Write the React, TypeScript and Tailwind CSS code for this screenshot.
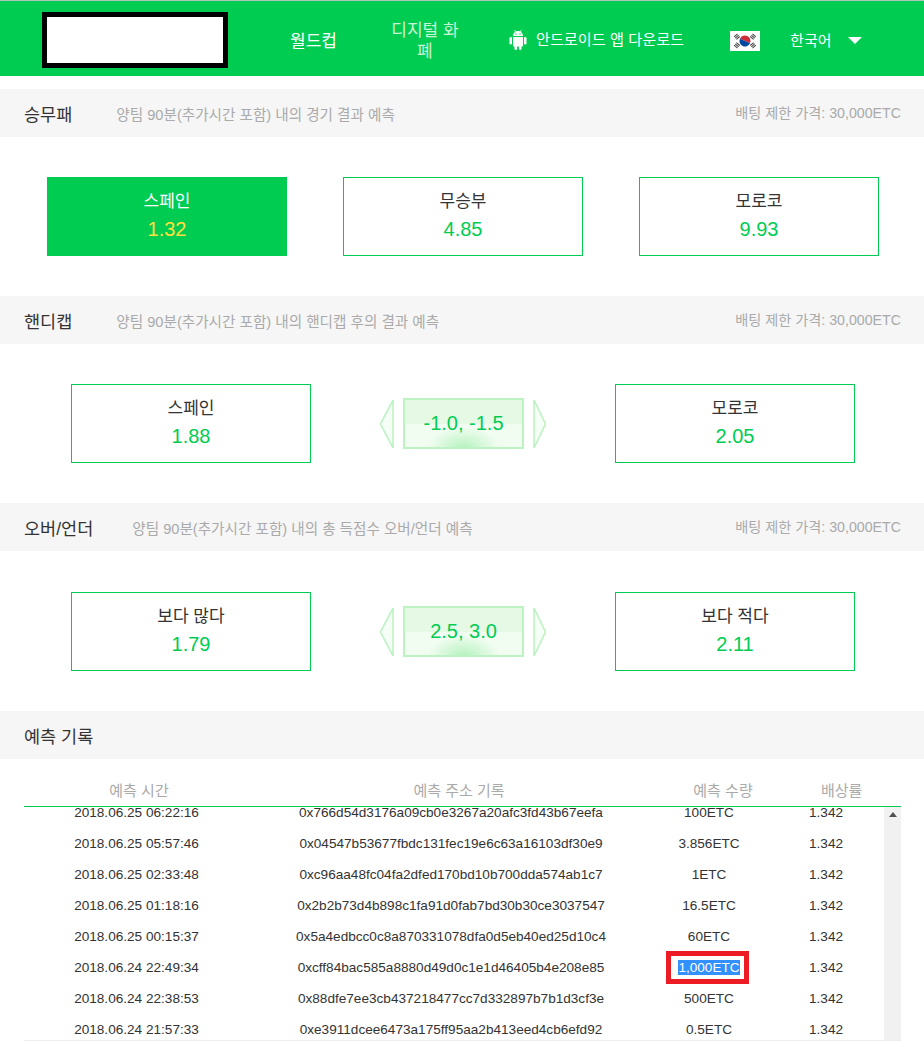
const font = "font-['Liberation_Sans','Noto_Sans_CJK_KR',sans-serif]";

const records = [
  ["2018.06.25 06:22:16", "0x766d54d3176a09cb0e3267a20afc3fd43b67eefa", "100ETC"],
  ["2018.06.25 05:57:46", "0x04547b53677fbdc131fec19e6c63a16103df30e9", "3.856ETC"],
  ["2018.06.25 02:33:48", "0xc96aa48fc04fa2dfed170bd10b700dda574ab1c7", "1ETC"],
  ["2018.06.25 01:18:16", "0x2b2b73d4b898c1fa91d0fab7bd30b30ce3037547", "16.5ETC"],
  ["2018.06.25 00:15:37", "0x5a4edbcc0c8a870331078dfa0d5eb40ed25d10c4", "60ETC"],
  ["2018.06.24 22:49:34", "0xcff84bac585a8880d49d0c1e1d46405b4e208e85", "1,000ETC"],
  ["2018.06.24 22:38:53", "0x88dfe7ee3cb437218477cc7d332897b7b1d3cf3e", "500ETC"],
  ["2018.06.24 21:57:33", "0xe3911dcee6473a175ff95aa2b413eed4cb6efd92", "0.5ETC"],
];

function AndroidIcon() {
  return (
    <svg width="18" height="21" viewBox="0 0 18 21" fill="#fff" className="block">
      <path d="M4 7a5 5 0 0 1 10 0z" />
      <path d="M5.500 1l1.500 2.500M12.500 1l-1.500 2.500" stroke="#fff" strokeWidth="0.8" />
      <circle cx="7" cy="5" r="0.7" fill="#00cc52" />
      <circle cx="11" cy="5" r="0.7" fill="#00cc52" />
      <path d="M4 8h10v8.500a1 1 0 0 1-1 1H5a1 1 0 0 1-1-1z" />
      <rect x="0.500" y="8" width="2.500" height="7.500" rx="1.250" />
      <rect x="15" y="8" width="2.500" height="7.500" rx="1.250" />
      <rect x="5.500" y="16" width="2.600" height="5" rx="1.300" />
      <rect x="9.900" y="16" width="2.600" height="5" rx="1.300" />
    </svg>
  );
}

function KoreaFlag() {
  return (
    <svg width="30" height="20" viewBox="0 0 30 20" className="block">
      <rect width="30" height="20" fill="#fff" />
      <path d="M9.500 10a5.500 5.500 0 0 1 11 0z" fill="#cd2e3a" transform="rotate(25 15 10)" />
      <path d="M9.500 10a5.500 5.500 0 0 0 11 0z" fill="#0047a0" transform="rotate(25 15 10)" />
      <g stroke="#444" strokeWidth="4.500" strokeDasharray="1 .7">
        <path d="M5.500 4l3 3.500M24.500 4l-3 3.500M5.500 16l3-3.500M24.500 16l-3-3.500" />
      </g>
    </svg>
  );
}

function SectionBar({
  title,
  desc,
  limit = true,
  gap = "mr-[44px]",
}: {
  title: string;
  desc?: string;
  limit?: boolean;
  gap?: string;
}) {
  return (
    <div className="flex h-12 items-center bg-[#f6f6f6] pl-6 pr-[23px] pt-1">
      <span className={`${gap} text-[17.5px] text-[#333]`}>{title}</span>
      {desc && <span className="mt-[2px] text-[14.6px] text-[#aaa]">{desc}</span>}
      {limit && <span className="mb-[3px] ml-auto text-[14.2px] text-[#aaa]">배팅 제한 가격: 30,000ETC</span>}
    </div>
  );
}

function OddsCard({ name, odds, active }: { name: string; odds: string; active?: boolean }) {
  return (
    <div
      className={`flex h-[79px] w-60 flex-col items-center justify-center border border-[#00cc52] pb-[2px] ${
        active ? "bg-[#00cc52]" : "bg-white"
      }`}
    >
      <span className={`text-[17px] leading-6 ${active ? "text-white" : "text-[#333]"}`}>{name}</span>
      <span className={`mt-[3px] text-xl leading-6 ${active ? "text-[#ffe03d]" : "text-[#00cc52]"}`}>{odds}</span>
    </div>
  );
}

function Handicap({ value }: { value: string }) {
  return (
    <div className="flex items-center gap-[9px]">
      <svg width="14" height="50" viewBox="0 0 14 50">
        <path d="M13 1v48L0.500 25z" fill="#f5fff5" stroke="#b9f2bf" strokeWidth="1.500" />
      </svg>
      <div className="flex h-[51px] w-[121px] items-center justify-center border-2 border-[#bdf2c3] bg-[radial-gradient(ellipse_36px_20px_at_50%_100%,#b8f2c0,transparent),linear-gradient(#e5f9e5_50%,#f2fdf2_50%)] pb-[2px] text-xl text-[#00cc52]">
        {value}
      </div>
      <svg width="13" height="50" viewBox="0 0 13 50">
        <path d="M1 1v48l11.500-24z" fill="#f5fff5" stroke="#b9f2bf" strokeWidth="1.500" />
      </svg>
    </div>
  );
}

export default function App() {
  return (
    <div className={`${font} relative h-[1042px] w-[924px] overflow-hidden bg-white`}>
      <header className="flex h-[76px] items-center border-t border-[#b5c4b9] bg-[#00cc52] pt-[3px] text-white">
        <div className="ml-[42px] h-[56px] w-[186px] border-[5px] border-black bg-white" />
        <a className="ml-[62px] mt-[3px] text-[17px]">월드컵</a>
        <a className="ml-[49px] mt-[2px] w-[78px] text-center text-[17px] leading-[21px] text-[#c9f5d6]">디지털 화폐</a>
        <a className="ml-[45px] flex items-center text-[15.200px]">
          <AndroidIcon />
          <span className="ml-[9px]">안드로이드 앱 다운로드</span>
        </a>
        <div className="ml-[46px] mt-[2px]">
          <KoreaFlag />
        </div>
        <span className="ml-[30px] mt-[3px] text-[15px]">한국어</span>
        <span className="ml-[16px] h-0 w-0 border-x-[7px] border-t-[7px] border-x-transparent border-t-white" />
      </header>

      <main className="pt-[13px]">
        <SectionBar title="승무패" desc="양팀 90분(추가시간 포함) 내의 경기 결과 예측" />
        <div className="flex justify-between py-10 pl-[47px] pr-[45px]">
          <OddsCard name="스페인" odds="1.32" active />
          <OddsCard name="무승부" odds="4.85" />
          <OddsCard name="모로코" odds="9.93" />
        </div>

        <SectionBar title="핸디캡" desc="양팀 90분(추가시간 포함) 내의 핸디캡 후의 결과 예측" />
        <div className="flex items-center justify-between py-10 pl-[71px] pr-[69px]">
          <OddsCard name="스페인" odds="1.88" />
          <Handicap value="-1.0, -1.5" />
          <OddsCard name="모로코" odds="2.05" />
        </div>

        <SectionBar title="오버/언더" desc="양팀 90분(추가시간 포함) 내의 총 득점수 오버/언더 예측" gap="mr-[39px]" />
        <div className="flex items-center justify-between pt-[41px] pb-10 pl-[71px] pr-[69px]">
          <OddsCard name="보다 많다" odds="1.79" />
          <Handicap value="2.5, 3.0" />
          <OddsCard name="보다 적다" odds="2.11" />
        </div>

        <SectionBar title="예측 기록" limit={false} />
        <section className="ml-6 mr-[23px] pt-[21px]">
          <div className="grid h-[27px] grid-cols-[230px_410px_118px_1fr] border-b border-[#00cc52] text-[15px] leading-[22px] text-[#aaa]">
            <span className="text-center">예측 시간</span>
            <span className="text-center">예측 주소 기록</span>
            <span className="text-center">예측 수량</span>
            <span className="pl-[39px]">배상률</span>
          </div>
          <div className="relative h-[234px] overflow-hidden border-b border-[#eee]">
            <div className="-mt-[9px] pr-4">
              {records.map(([time, addr, qty]) => (
                <div key={addr} className="grid h-[31px] grid-cols-[225px_404px_112px_1fr] items-center text-[13.600px] text-[#333]">
                  <span className="text-center">{time}</span>
                  <span className="text-center">{addr}</span>
                  <span className="text-center">
                    {qty === "1,000ETC" ? <span className="bg-[#3390ff] text-white">{qty}</span> : qty}
                  </span>
                  <span className="pl-[44px]">1.342</span>
                </div>
              ))}
            </div>
            {/* scrollbar track */}
            <div className="absolute inset-y-0 right-0 w-[17px] bg-[#f1f1f1]">
              <span className="mx-auto mt-[5px] block h-0 w-0 border-x-[4px] border-b-[5px] border-x-transparent border-b-[#505050]" />
            </div>
          </div>
        </section>
      </main>

      {/* annotation box around the selected amount */}
      <div className="absolute left-[666px] top-[951px] h-[33px] w-[83px] border-[5px] border-[#ed1c24]" />
    </div>
  );
}
